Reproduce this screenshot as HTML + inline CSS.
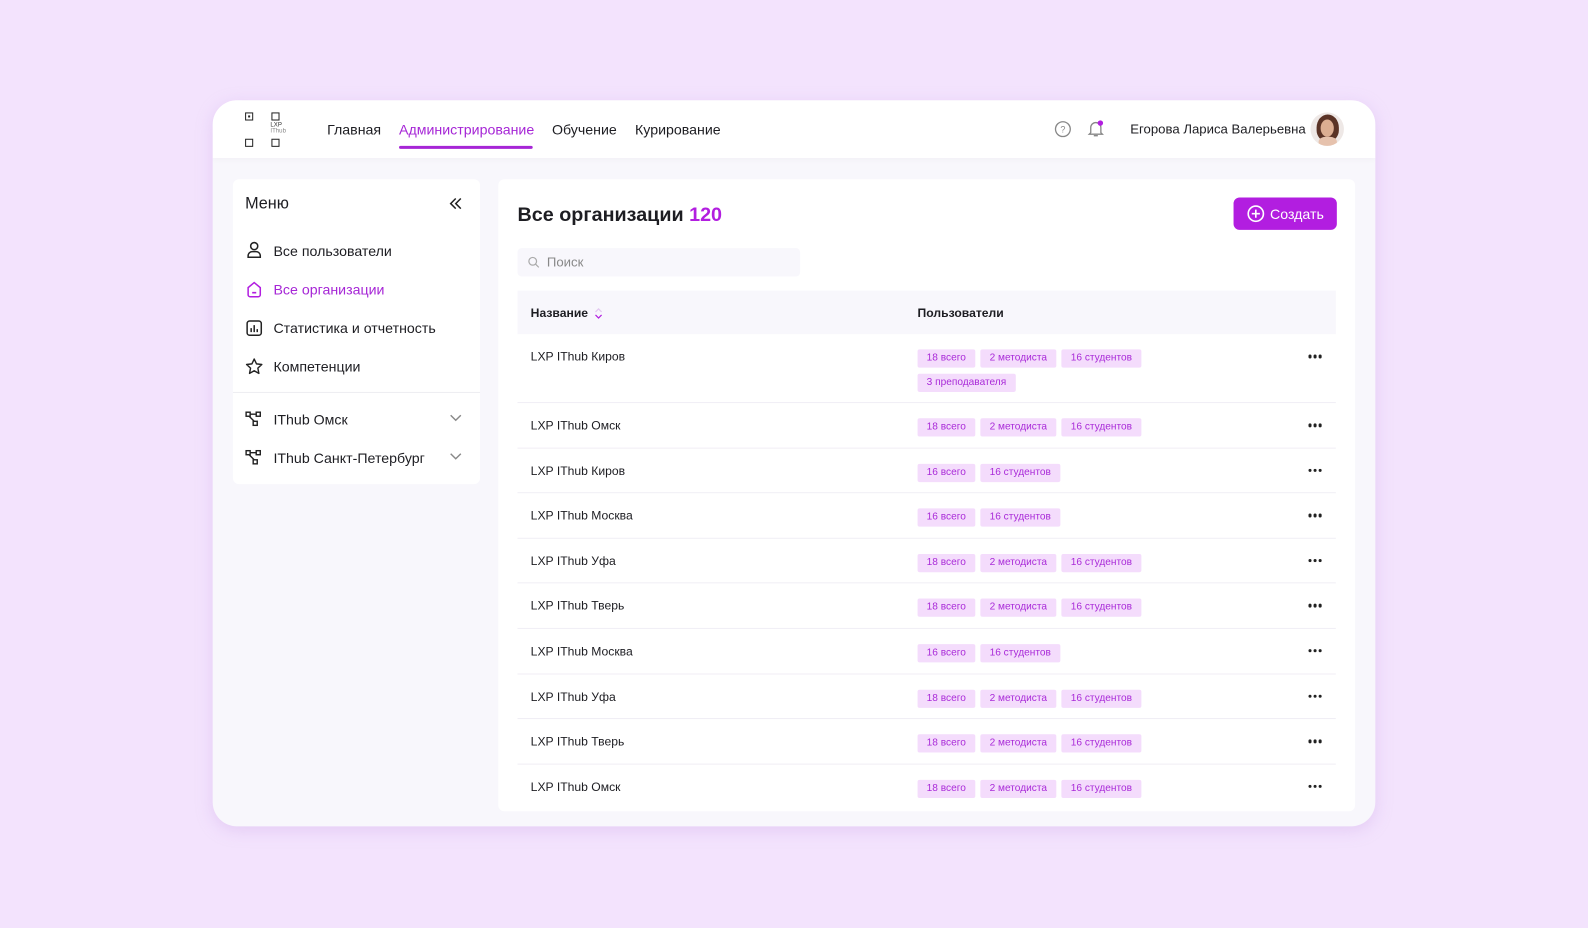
<!DOCTYPE html>
<html><head><meta charset="utf-8">
<style>
*{box-sizing:border-box;margin:0;padding:0}
html,body{width:1588px;height:928px;overflow:hidden}
body{background:#f3e3fd;font-family:"Liberation Sans","DejaVu Sans",sans-serif;color:#1d1d22;position:relative}
#wrap{position:absolute;left:0;top:0;width:1568px;height:916px;transform:scale(1.01276);transform-origin:0 0}
.card{position:absolute;left:210px;top:99px;width:1148px;height:717px;background:#f8f7fc;border-radius:24px;overflow:hidden;box-shadow:0 4px 16px rgba(200,160,230,.35)}
.hdr{position:absolute;left:0;top:0;width:100%;height:57px;background:#fff;box-shadow:0 2px 6px rgba(0,0,0,.03)}
.abs{position:absolute}
.nav{position:absolute;top:21px;font-size:14px;color:#1d1d22}
.sq{position:absolute;width:8px;height:8px;border:1.6px solid #222}
.side{position:absolute;left:20px;top:78px;width:244px;height:301px;background:#fff;border-radius:6px}
.mi{position:absolute;left:40px;font-size:14px}
.main{position:absolute;left:282px;top:78px;width:846px;height:624px;background:#fff;border-radius:6px}
.tbl{position:absolute;left:19px;top:110px;width:808px}
.th{height:43px;background:#f8f7fc;position:relative;font-size:12px;font-weight:bold}
.row{position:relative;border-top:1px solid #f0eef5;height:44.6px}
.nm{position:absolute;left:13px;top:15px;font-size:12px}
.tags{position:absolute;left:395px;top:13px;width:260px}
.tag{display:inline-block;height:18px;line-height:18px;padding:0 9px;margin:0 1px 4px 0;background:#f4dcfc;color:#a92ad8;font-size:10px;border-radius:2px}
.dots{position:absolute;right:14px;top:20px;font-size:0}
.dots i{display:inline-block;width:3.5px;height:3.5px;background:#222;border-radius:50%;margin-left:1.5px}
</style></head><body>
<div id="wrap">
<div class="card">
 <div class="hdr">
  <div class="sq" style="left:32px;top:12px"><div style="position:absolute;left:1.5px;top:1.5px;width:2px;height:2px;background:#222"></div></div>
  <div class="sq" style="left:58px;top:12px"></div>
  <div class="sq" style="left:32px;top:38px"></div>
  <div class="sq" style="left:58px;top:38px"></div>
  <div class="abs" style="left:57px;top:22px;font-size:6px;line-height:6px;color:#333">LXP<br><span style="color:#888">IThub</span></div>
  <div class="nav" style="left:113px">Главная</div>
  <div class="nav" style="left:184px;color:#a626d6">Администрирование</div>
  <div class="abs" style="left:184px;top:45px;width:132px;height:3px;background:#a626d6;border-radius:2px"></div>
  <div class="nav" style="left:335px">Обучение</div>
  <div class="nav" style="left:417px">Курирование</div>
  <svg class="abs" style="left:831px;top:20px" width="17" height="17" viewBox="0 0 17 17"><circle cx="8.5" cy="8.5" r="7.3" fill="none" stroke="#888" stroke-width="1.3"/><text x="8.5" y="12" font-size="9" text-anchor="middle" fill="#888" font-family="Liberation Sans">?</text></svg>
  <svg class="abs" style="left:863px;top:19px" width="18" height="18" viewBox="0 0 18 18"><path d="M4 13V8a5 5 0 0 1 10 0v5l1.5 1.5h-13z M7 16h4" fill="none" stroke="#888" stroke-width="1.3"/><circle cx="13.5" cy="3.5" r="2.7" fill="#b21ee0"/></svg>
  <div class="nav" style="left:906px;font-size:13px">Егорова Лариса Валерьевна</div>
  <div class="abs" style="left:1084px;top:12px;width:33px;height:33px;border-radius:50%;overflow:hidden;background:#eee8e6">
   <div class="abs" style="left:6px;top:2px;width:22px;height:26px;border-radius:50% 50% 40% 40%;background:#5a3326"></div>
   <div class="abs" style="left:10px;top:7px;width:13px;height:17px;border-radius:50%;background:#dcae92"></div>
   <div class="abs" style="left:8px;top:24px;width:18px;height:12px;border-radius:40%;background:#e6c2ad"></div>
  </div>
 </div>
 <div class="side">
  <div class="abs" style="left:12px;top:16px;font-size:16px">Меню</div>
  <svg class="abs" style="left:213px;top:18px" width="14" height="12" viewBox="0 0 14 12"><path d="M7 1L2 6l5 5M12 1L7 6l5 5" fill="none" stroke="#222" stroke-width="1.5"/></svg>
  <svg class="abs" style="left:13px;top:61px" width="16" height="17" viewBox="0 0 16 17"><circle cx="8" cy="5" r="3.5" fill="none" stroke="#222" stroke-width="1.5"/><path d="M2 16v-1.5a4 4 0 0 1 4-4h4a4 4 0 0 1 4 4V16z" fill="none" stroke="#222" stroke-width="1.5"/></svg>
  <div class="mi" style="top:63px">Все пользователи</div>
  <svg class="abs" style="left:13px;top:100px" width="16" height="17" viewBox="0 0 16 17"><path d="M2 7L8 2l6 5v7a2 2 0 0 1-2 2H4a2 2 0 0 1-2-2z" fill="none" stroke="#b21ee0" stroke-width="1.5"/><path d="M6 12h4" stroke="#b21ee0" stroke-width="1.5"/></svg>
  <div class="mi" style="top:101px;color:#a626d6">Все организации</div>
  <svg class="abs" style="left:13px;top:139px" width="16" height="16" viewBox="0 0 16 16"><rect x="1" y="1" width="14" height="14" rx="2.5" fill="none" stroke="#222" stroke-width="1.5"/><path d="M5 12V8M8 12V5M11 12V9" stroke="#222" stroke-width="1.5"/></svg>
  <div class="mi" style="top:139px">Статистика и отчетность</div>
  <svg class="abs" style="left:12px;top:176px" width="18" height="17" viewBox="0 0 18 17"><path d="M9 1.5l2.3 4.8 5.2.6-3.9 3.6 1 5.2L9 13.1l-4.6 2.6 1-5.2L1.5 6.9l5.2-.6z" fill="none" stroke="#222" stroke-width="1.4" stroke-linejoin="round"/></svg>
  <div class="mi" style="top:177px">Компетенции</div>
  <div class="abs" style="left:0;top:210px;width:244px;height:1px;background:#eeedf2"></div>
  <svg class="abs" style="left:12px;top:229px" width="17" height="15" viewBox="0 0 17 15"><rect x="1" y="1" width="4" height="4" fill="none" stroke="#222" stroke-width="1.4"/><rect x="11" y="1" width="4" height="4" fill="none" stroke="#222" stroke-width="1.4"/><rect x="8" y="10" width="4" height="4" fill="none" stroke="#222" stroke-width="1.4"/><path d="M5 3h6M4 5l5 5" stroke="#222" stroke-width="1.4"/></svg>
  <div class="mi" style="top:229px">IThub Омск</div>
  <svg class="abs" style="left:214px;top:232px" width="12" height="8" viewBox="0 0 12 8"><path d="M1 1l5 5 5-5" fill="none" stroke="#888" stroke-width="1.4"/></svg>
  <svg class="abs" style="left:12px;top:267px" width="17" height="15" viewBox="0 0 17 15"><rect x="1" y="1" width="4" height="4" fill="none" stroke="#222" stroke-width="1.4"/><rect x="11" y="1" width="4" height="4" fill="none" stroke="#222" stroke-width="1.4"/><rect x="8" y="10" width="4" height="4" fill="none" stroke="#222" stroke-width="1.4"/><path d="M5 3h6M4 5l5 5" stroke="#222" stroke-width="1.4"/></svg>
  <div class="mi" style="top:267px">IThub Санкт-Петербург</div>
  <svg class="abs" style="left:214px;top:270px" width="12" height="8" viewBox="0 0 12 8"><path d="M1 1l5 5 5-5" fill="none" stroke="#888" stroke-width="1.4"/></svg>
 </div>
 <div class="main">
  <div class="abs" style="left:19px;top:24px;font-size:19.5px;font-weight:bold">Все организации <span style="color:#b21ee0">120</span></div>
  <div class="abs" style="left:726px;top:18px;width:102px;height:32px;background:#b21ee0;border-radius:6px;color:#fff;font-size:14px;line-height:32px;padding-left:36px">Создать</div>
  <svg class="abs" style="left:739px;top:25px" width="18" height="18" viewBox="0 0 18 18"><circle cx="9" cy="9" r="7.5" fill="none" stroke="#fff" stroke-width="1.6"/><path d="M9 5v8M5 9h8" stroke="#fff" stroke-width="1.6"/></svg>
  <div class="abs" style="left:19px;top:68px;width:279px;height:28px;background:#f8f7fc;border-radius:4px"></div>
  <svg class="abs" style="left:29px;top:76px" width="12" height="12" viewBox="0 0 12 12"><circle cx="5" cy="5" r="3.8" fill="none" stroke="#aaa" stroke-width="1.2"/><path d="M8 8l3 3" stroke="#aaa" stroke-width="1.2"/></svg>
  <div class="abs" style="left:48px;top:74px;font-size:13px;color:#888">Поиск</div>
  <div class="tbl">
   <div class="th"><span class="abs" style="left:13px;top:15px">Название</span>
    <svg class="abs" style="left:76px;top:17px" width="8" height="11" viewBox="0 0 8 11"><path d="M1 4l3-3 3 3" fill="none" stroke="#e3c8f0" stroke-width="1.2"/><path d="M1 7l3 3 3-3" fill="none" stroke="#b21ee0" stroke-width="1.2"/></svg>
    <span class="abs" style="left:395px;top:15px">Пользователи</span></div>
   <div class="row" style="height:67px;border-top:none"><div class="nm">LXP IThub Киров</div><div class="tags"><span class="tag">18 всего</span> <span class="tag">2 методиста</span> <span class="tag">16 студентов</span> <span class="tag">3 преподавателя</span></div><div class="dots"><i></i><i></i><i></i></div></div>
   <div class="row"><div class="nm">LXP IThub Омск</div><div class="tags"><span class="tag">18 всего</span> <span class="tag">2 методиста</span> <span class="tag">16 студентов</span></div><div class="dots"><i></i><i></i><i></i></div></div>
   <div class="row"><div class="nm">LXP IThub Киров</div><div class="tags"><span class="tag">16 всего</span> <span class="tag">16 студентов</span></div><div class="dots"><i></i><i></i><i></i></div></div>
   <div class="row"><div class="nm">LXP IThub Москва</div><div class="tags"><span class="tag">16 всего</span> <span class="tag">16 студентов</span></div><div class="dots"><i></i><i></i><i></i></div></div>
   <div class="row"><div class="nm">LXP IThub Уфа</div><div class="tags"><span class="tag">18 всего</span> <span class="tag">2 методиста</span> <span class="tag">16 студентов</span></div><div class="dots"><i></i><i></i><i></i></div></div>
   <div class="row"><div class="nm">LXP IThub Тверь</div><div class="tags"><span class="tag">18 всего</span> <span class="tag">2 методиста</span> <span class="tag">16 студентов</span></div><div class="dots"><i></i><i></i><i></i></div></div>
   <div class="row"><div class="nm">LXP IThub Москва</div><div class="tags"><span class="tag">16 всего</span> <span class="tag">16 студентов</span></div><div class="dots"><i></i><i></i><i></i></div></div>
   <div class="row"><div class="nm">LXP IThub Уфа</div><div class="tags"><span class="tag">18 всего</span> <span class="tag">2 методиста</span> <span class="tag">16 студентов</span></div><div class="dots"><i></i><i></i><i></i></div></div>
   <div class="row"><div class="nm">LXP IThub Тверь</div><div class="tags"><span class="tag">18 всего</span> <span class="tag">2 методиста</span> <span class="tag">16 студентов</span></div><div class="dots"><i></i><i></i><i></i></div></div>
   <div class="row"><div class="nm">LXP IThub Омск</div><div class="tags"><span class="tag">18 всего</span> <span class="tag">2 методиста</span> <span class="tag">16 студентов</span></div><div class="dots"><i></i><i></i><i></i></div></div>
  </div>
 </div>
</div>
</div>
</body></html>
